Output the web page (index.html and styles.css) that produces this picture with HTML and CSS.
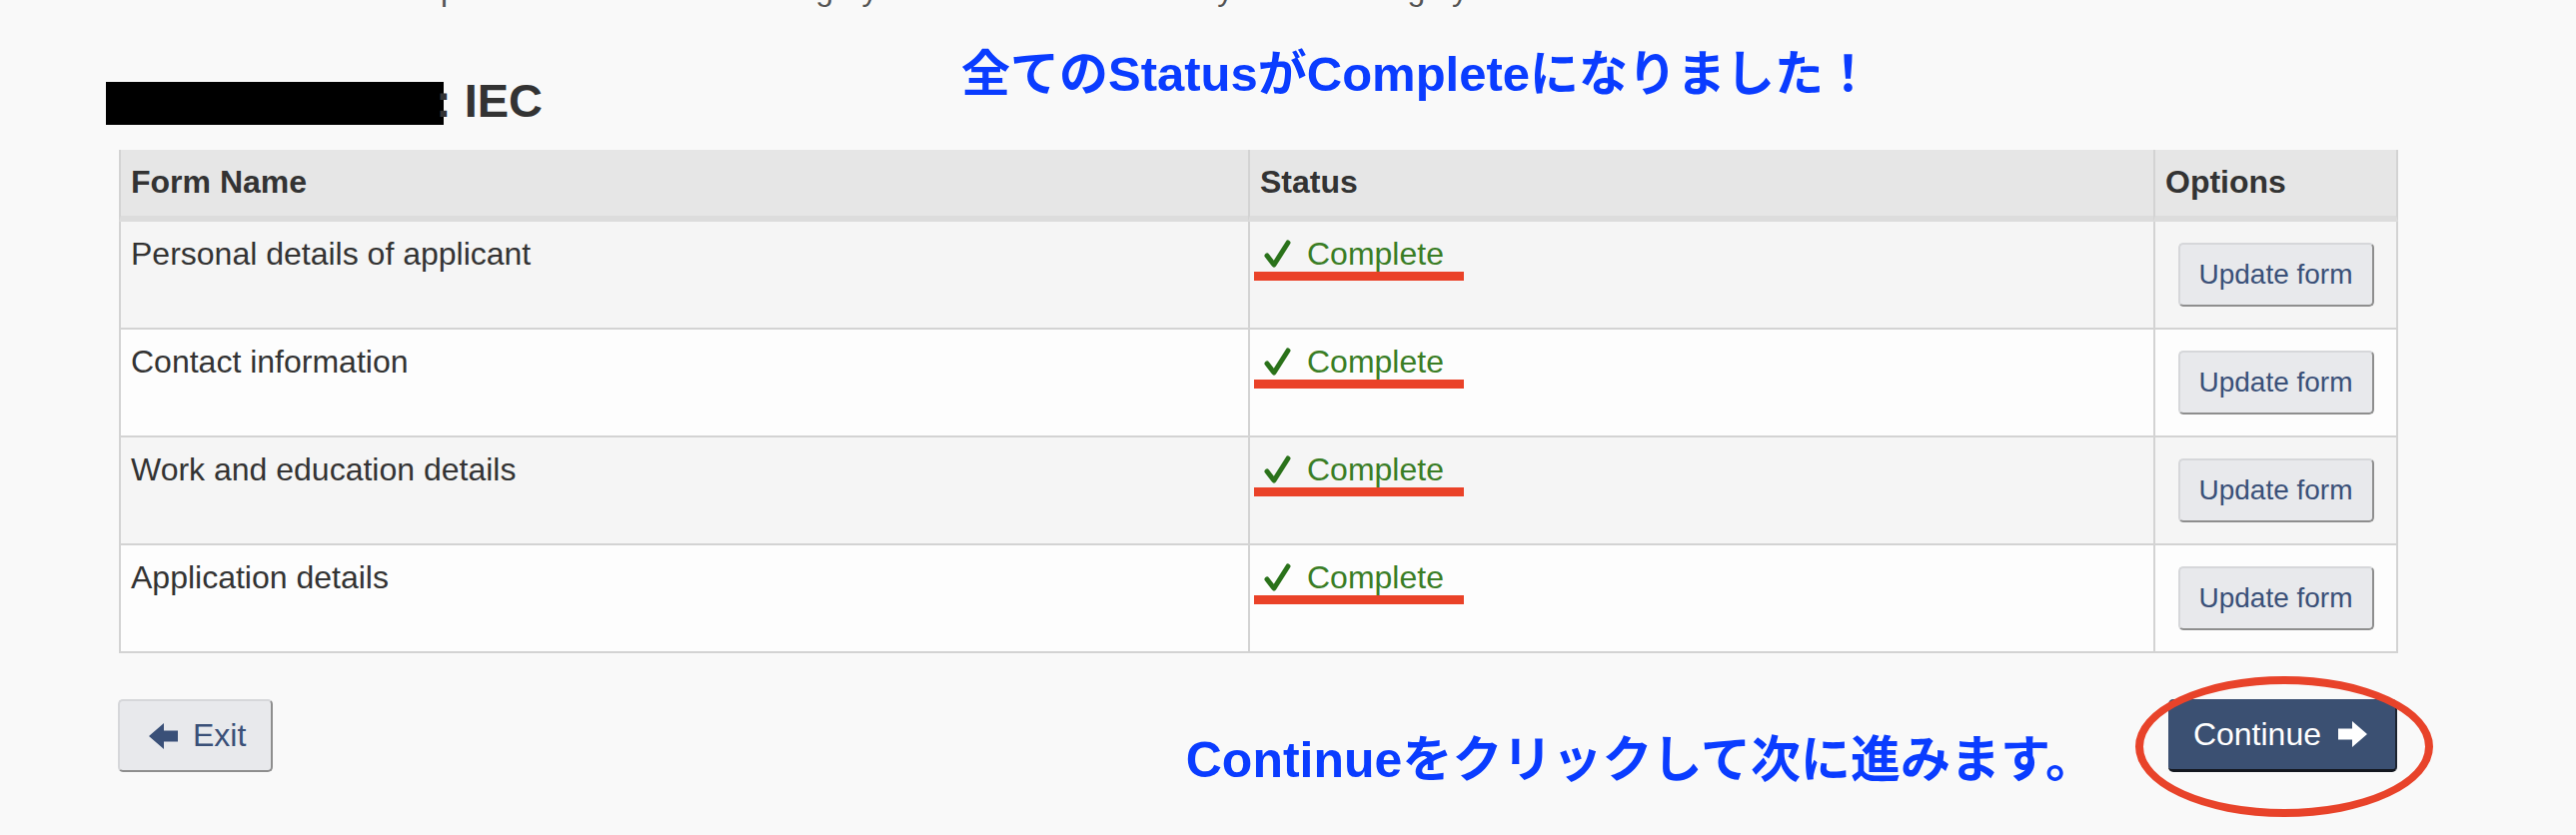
FILE: index.html
```html
<!DOCTYPE html>
<html lang="ja">

<head>
    <meta charset="UTF-8">
    <meta name="viewport" content="width=device-width, initial-scale=1.0">
    <title>IEC - Profile</title>
    <link rel="stylesheet" href="styles.css">
</head>

<body>
    <div class="page">
        <p class="intro"><span>The status of each questionnaire for each category is shown below so that you can change your answers.</span></p>

        <div class="title-row">
            <h2 class="title"><span class="redacted"></span>: IEC</h2>
            <p class="note note-top">全てのStatusがCompleteになりました！</p>
        </div>

        <table class="forms">
            <thead>
                <tr>
                    <th class="col-name">Form Name</th>
                    <th class="col-status">Status</th>
                    <th class="col-options">Options</th>
                </tr>
            </thead>
            <tbody>
                <tr>
                    <td>Personal details of applicant</td>
                    <td class="status">
                        <span class="done"><svg class="check" viewBox="0 0 27 28"><polyline points="3,16 10,25 24,3"/></svg>Complete</span>
                        <span class="mark"></span>
                    </td>
                    <td class="options"><button class="btn btn-default btn-update">Update form</button></td>
                </tr>
                <tr>
                    <td>Contact information</td>
                    <td class="status">
                        <span class="done"><svg class="check" viewBox="0 0 27 28"><polyline points="3,16 10,25 24,3"/></svg>Complete</span>
                        <span class="mark"></span>
                    </td>
                    <td class="options"><button class="btn btn-default btn-update">Update form</button></td>
                </tr>
                <tr>
                    <td>Work and education details</td>
                    <td class="status">
                        <span class="done"><svg class="check" viewBox="0 0 27 28"><polyline points="3,16 10,25 24,3"/></svg>Complete</span>
                        <span class="mark"></span>
                    </td>
                    <td class="options"><button class="btn btn-default btn-update">Update form</button></td>
                </tr>
                <tr>
                    <td>Application details</td>
                    <td class="status">
                        <span class="done"><svg class="check" viewBox="0 0 27 28"><polyline points="3,16 10,25 24,3"/></svg>Complete</span>
                        <span class="mark"></span>
                    </td>
                    <td class="options"><button class="btn btn-default btn-update">Update form</button></td>
                </tr>
            </tbody>
        </table>

        <div class="actions">
            <button class="btn btn-default btn-exit">
                <svg class="arrow" viewBox="0 0 29 26"><polygon points="0,13 15,0 15,7.5 29,7.5 29,18.5 15,18.5 15,26"/></svg>
                Exit
            </button>
            <p class="note note-bottom">Continueをクリックして次に進みます。</p>
            <div class="continue-wrap">
                <button class="btn btn-primary">
                    Continue
                    <svg class="arrow" viewBox="0 0 29 26"><polygon points="29,13 14,0 14,7.5 0,7.5 0,18.5 14,18.5 14,26"/></svg>
                </button>
                <span class="circle"></span>
            </div>
        </div>
    </div>
</body>

</html>
```

FILE: styles.css
```css
body {
    margin: 0;
    background-color: #f9f9f9;
    font-family: "Liberation Sans", Arial, sans-serif;
    color: #333;
}

.page {
    width: 2294px;
    padding: 0 0 45px 106px;
}

/* line cut off by the top of the screenshot: only descenders show */
.intro {
    height: 8px;
    margin: 0 0 0 52px;
    overflow: hidden;
    font-size: 32px;
    color: #555;
    white-space: nowrap;
}

.intro span {
    display: block;
    margin-top: -34px;
    line-height: 46px;
}

.title-row {
    display: flex;
    position: relative;
}

.title {
    margin: 67px 0 0 0;
    font-size: 47px;
    line-height: 52px;
    font-weight: bold;
    color: #333;
}

.redacted {
    display: inline-block;
    width: 338px;
    height: 43px;
    margin-right: -8px;
    vertical-align: -8px;
    background-color: #000;
}

/* blue notes written over the screenshot */
.note {
    margin: 0;
    font-family: "Liberation Sans", "Noto Sans CJK JP", sans-serif;
    line-height: 1;
    font-weight: bold;
    color: #0a3cff;
    white-space: nowrap;
}

.note-top {
    position: absolute;
    left: 856px;
    top: 42px;
    font-size: 49px;
}

.forms {
    width: 2281px;
    margin: 23px 0 0 13px;
    border-collapse: separate;
    border-spacing: 0;
    table-layout: fixed;
    font-size: 32px;
    line-height: 1.42857;
}

.forms th,
.forms td {
    box-sizing: border-box;
    padding: 10px 10px;
    border-left: 2px solid #d3d3d3;
    text-align: left;
    vertical-align: top;
}

.forms th:last-child,
.forms td:last-child {
    border-right: 2px solid #d3d3d3;
}

.forms thead tr {
    height: 72px;
}

.forms th {
    background-color: #e6e6e6;
    border-bottom: 6px solid #dcdcdc;
    font-weight: bold;
}

.col-name {
    width: 1130px;
}

.col-status {
    width: 906px;
}

.col-options {
    width: 245px;
}

.forms tbody tr {
    height: 108px;
}

.forms td {
    border-bottom: 2px solid #d3d3d3;
    background-color: #fdfdfd;
}

.forms tbody tr:nth-child(odd) td {
    background-color: #f5f5f5;
}

.done {
    color: #3a7d25;
}

.check {
    width: 27px;
    height: 28px;
    margin: 0 16px 0 4px;
    vertical-align: -3px;
    fill: none;
    stroke: #2a721a;
    stroke-width: 5;
    stroke-linecap: round;
    stroke-linejoin: round;
}

.mark {
    display: block;
    width: 210px;
    height: 9px;
    margin: -6px 0 0 -6px;
    background-color: #ea4228;
}

.forms td.options {
    padding: 0;
    text-align: center;
    vertical-align: middle;
}

.btn {
    box-sizing: border-box;
    display: inline-flex;
    align-items: center;
    justify-content: center;
    font-family: "Liberation Sans", Arial, sans-serif;
    border-radius: 5px;
    cursor: pointer;
}

.btn-default {
    background-color: #e8e9ec;
    color: #3a5078;
    border: 2px solid #d6d7da;
    border-right-color: #8e8e8e;
    border-bottom-color: #8e8e8e;
}

.btn-update {
    width: 196px;
    height: 64px;
    padding: 0;
    font-size: 28px;
}

.actions {
    display: flex;
    align-items: flex-start;
    width: 2281px;
    margin: 46px 0 0 12px;
}

.btn-exit {
    height: 73px;
    padding: 0 25px 0 29px;
    gap: 15px;
    font-size: 32px;
}

.arrow {
    width: 29px;
    height: 26px;
    fill: currentColor;
}

.note-bottom {
    margin: 36px 73px 0 auto;
    font-size: 50px;
}

.continue-wrap {
    position: relative;
}

.btn-primary {
    height: 73px;
    padding: 0 28px 0 25px;
    gap: 17px;
    font-size: 32px;
    color: #fff;
    background-color: #3b5072;
    border: 0;
    border-right: 2px solid #1d2430;
    border-bottom: 3px solid #141820;
}

.circle {
    position: absolute;
    left: -33px;
    top: -23px;
    box-sizing: border-box;
    width: 298px;
    height: 141px;
    border: 8px solid #e8432a;
    border-radius: 50%;
    pointer-events: none;
}
```
